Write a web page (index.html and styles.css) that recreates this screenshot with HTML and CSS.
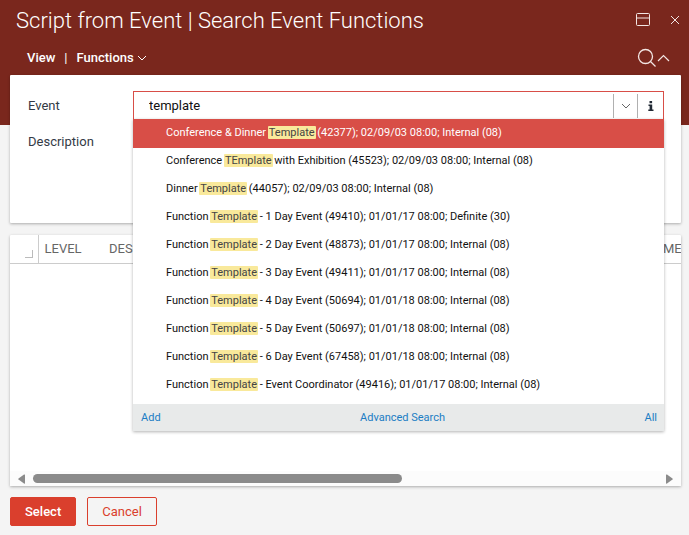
FILE: index.html
```html
<!DOCTYPE html>
<html lang="en">
<head>
<meta charset="UTF-8">
<title>Script from Event | Search Event Functions</title>
<meta name="viewport" content="width=device-width, initial-scale=1.0">
<link rel="stylesheet" href="styles.css">
</head>
<body>

<header class="header">
  <div class="title-bar">
    <h1>Script from Event | Search Event Functions</h1>
    <button type="button" class="icon-button" aria-label="Maximize">
      <svg width="16" height="14" viewBox="0 0 16 14" fill="none" stroke="currentColor">
        <rect x="1.5" y=".5" width="13" height="12" rx="1"/>
        <path d="M1.5 5h13"/>
      </svg>
    </button>
    <button type="button" class="icon-button close" aria-label="Close">
      <svg width="10" height="10" viewBox="0 0 10 10" fill="none" stroke="currentColor">
        <path d="M1 1l8 8M9 1l-8 8"/>
      </svg>
    </button>
  </div>
  <nav class="menu-bar">
    <button type="button" class="menu-item">View</button>
    <span class="divider">|</span>
    <button type="button" class="menu-item">Functions
      <svg width="10" height="6" viewBox="0 0 10 6" fill="none" stroke="currentColor">
        <path d="M1 1l4 4 4-4"/>
      </svg>
    </button>
    <button type="button" class="icon-button search" aria-label="Search">
      <svg width="20" height="20" viewBox="0 0 20 20" fill="none" stroke="currentColor" stroke-width="1.3">
        <circle cx="8.5" cy="8.5" r="7"/>
        <path d="M13.5 13.5l5 5"/>
      </svg>
    </button>
    <button type="button" class="icon-button" aria-label="Collapse">
      <svg width="13" height="8" viewBox="0 0 13 8" fill="none" stroke="currentColor" stroke-width="1.2">
        <path d="M1 7l5.500-5.500L12 7"/>
      </svg>
    </button>
  </nav>
</header>

<main>
  <section class="panel form">
    <div class="form-row">
      <label for="event">Event</label>
      <div class="lookup">
        <input type="text" id="event" value="template" autocomplete="off">
        <button type="button" class="lookup-button" aria-label="Open list">
          <svg width="10" height="6" viewBox="0 0 10 6" fill="none" stroke="currentColor">
            <path d="M1 1l4 4 4-4"/>
          </svg>
        </button>
        <button type="button" class="lookup-button info" aria-label="Information">
          <svg width="6" height="10" viewBox="0 0 6 10" fill="currentColor">
            <path d="M1.5 0h2.600v2.200H1.500zM.5 3.400h3.700v5H5.500V10H.3V8.400h1.300V5H.5z"/>
          </svg>
        </button>

        <div class="dropdown">
          <ul class="results">
            <li class="selected">Conference &amp; Dinner <mark>Template</mark> (42377); 02/09/03 08:00; Internal (08)</li>
            <li>Conference <mark>TEmplate</mark> with Exhibition (45523); 02/09/03 08:00; Internal (08)</li>
            <li>Dinner <mark>Template</mark> (44057); 02/09/03 08:00; Internal (08)</li>
            <li>Function <mark>Template</mark> - 1 Day Event (49410); 01/01/17 08:00; Definite (30)</li>
            <li>Function <mark>Template</mark> - 2 Day Event (48873); 01/01/17 08:00; Internal (08)</li>
            <li>Function <mark>Template</mark> - 3 Day Event (49411); 01/01/17 08:00; Internal (08)</li>
            <li>Function <mark>Template</mark> - 4 Day Event (50694); 01/01/18 08:00; Internal (08)</li>
            <li>Function <mark>Template</mark> - 5 Day Event (50697); 01/01/18 08:00; Internal (08)</li>
            <li>Function <mark>Template</mark> - 6 Day Event (67458); 01/01/18 08:00; Internal (08)</li>
            <li>Function <mark>Template</mark> - Event Coordinator (49416); 01/01/17 08:00; Internal (08)</li>
          </ul>
          <div class="dropdown-footer">
            <a href="#">Add</a>
            <a href="#">Advanced Search</a>
            <a href="#">All</a>
          </div>
        </div>
      </div>
    </div>
    <div class="form-row">
      <span class="label">Description</span>
    </div>
  </section>

  <section class="panel grid">
    <div class="grid-scroll">
      <table>
        <thead>
          <tr>
            <th class="corner"><span></span></th>
            <th class="level">LEVEL</th>
            <th class="description">DESC</th>
            <th>ME</th>
          </tr>
        </thead>
      </table>
    </div>
    <div class="scrollbar">
      <svg width="7" height="10" viewBox="0 0 7 10" fill="currentColor"><path d="M7 1v8Q7 10 6 9.400L.5 5.600Q0 5 .5 4.400L6 .6Q7 0 7 1z"/></svg>
      <div class="track"><div class="thumb"></div></div>
      <svg width="7" height="10" viewBox="0 0 7 10" fill="currentColor"><path d="M0 1v8Q0 10 1 9.400L6.500 5.600Q7 5 6.500 4.400L1 .6Q0 0 0 1z"/></svg>
    </div>
  </section>
</main>

<footer class="actions">
  <button type="button" class="button primary">Select</button>
  <button type="button" class="button">Cancel</button>
</footer>

</body>
</html>
```
FILE: styles.css
```css
* {
  box-sizing: border-box;
}

body {
  display: flex;
  flex-direction: column;
  min-height: 100vh;
  margin: 0;
  background: #f4f4f4;
  color: #333a45;
  font-family: Roboto, Arial, sans-serif;
  font-size: 13px;
}

button {
  font: inherit;
  cursor: pointer;
}

svg {
  display: block;
}

.header {
  padding-bottom: 50px;
  background: #7a271d;
  color: #fff;
}

.title-bar {
  display: flex;
  align-items: center;
  height: 40px;
  padding: 0 9px 0 16px;
}

.title-bar h1 {
  flex: 1;
  margin: 0;
  font-size: 22px;
  font-weight: 300;
}

.icon-button {
  padding: 0;
  border: 0;
  background: none;
  color: #f3e6e4;
}

.close {
  margin-left: 19px;
}

.menu-bar {
  display: flex;
  align-items: center;
  height: 35px;
  padding: 0 19px 0 27px;
}

.menu-item {
  display: flex;
  align-items: center;
  gap: 3px;
  padding: 0;
  border: 0;
  background: none;
  color: #fff;
  font-weight: 500;
}

.divider {
  margin: 0 9px;
}

.search {
  margin-left: auto;
}

main {
  display: flex;
  flex: 1;
  flex-direction: column;
  gap: 12px;
  margin-top: -50px;
  padding: 0 8px 0 10px;
}

.panel {
  border-radius: 1px;
  background: #fff;
  box-shadow: 0 1px 3px rgba(0, 0, 0, 0.3);
}

.form {
  min-height: 148px;
  padding: 16px 17px 16px 18px;
}

.form-row {
  display: flex;
  align-items: center;
  min-height: 28px;
  margin-bottom: 8px;
}

.form-row label,
.form-row .label {
  width: 105px;
}

.lookup {
  position: relative;
  display: flex;
  flex: 1;
  align-items: center;
  height: 28px;
  border: 1px solid #d84e47;
  border-bottom: 0;
}

.lookup input {
  flex: 1;
  min-width: 0;
  padding: 0 15px;
  border: 0;
  outline: 0;
  background: none;
  color: #111;
  font: inherit;
}

.lookup-button {
  display: flex;
  align-items: center;
  justify-content: center;
  width: 24px;
  height: 24px;
  padding: 0;
  border: 0;
  border-left: 1px solid #b0b0b0;
  background: none;
  color: #666;
}

.lookup-button.info {
  width: 26px;
  color: #222a35;
}

.dropdown {
  position: absolute;
  top: 100%;
  left: -1px;
  right: -1px;
  z-index: 1;
  background: #fff;
  box-shadow: 0 1px 3px rgba(0, 0, 0, 0.3);
}

.results {
  margin: 0;
  padding: 0 0 5px;
  list-style: none;
  color: #111;
  font-size: 11px;
  line-height: 28px;
}

.results li {
  padding-left: 33px;
}

.results .selected {
  margin-bottom: -1px;
  padding-bottom: 1px;
  background: #d84e47;
  color: #fff;
}

.results mark {
  margin: 0 -1px;
  padding: 0 1px;
  border-radius: 1px;
  background: #f9e99b;
  color: #444;
}

.dropdown-footer {
  display: flex;
  align-items: center;
  justify-content: space-between;
  height: 27px;
  padding: 0 7px 0 8px;
  background: #e8eaea;
  font-size: 11px;
}

.dropdown-footer a {
  color: #1b7dc4;
  text-decoration: none;
}

.grid {
  display: flex;
  flex: 1;
  flex-direction: column;
}

.grid-scroll {
  flex: 1;
  overflow: hidden;
}

.grid table {
  width: 900px;
  border-collapse: collapse;
  table-layout: fixed;
}

.grid th {
  height: 28px;
  padding: 0 6px;
  border-bottom: 1px solid #ccc;
  color: #666;
  font-weight: 400;
  text-align: left;
}

.grid .corner {
  width: 28px;
  padding: 0 5px 5px 0;
  border-right: 1px solid #ccc;
  vertical-align: bottom;
}

.corner span {
  display: block;
  width: 8px;
  height: 8px;
  margin-left: auto;
  border: solid #bbb;
  border-width: 0 1px 1px 0;
}

.grid .level {
  width: 65px;
}

.grid .description {
  width: 554px;
}

.scrollbar {
  display: flex;
  align-items: center;
  gap: 8px;
  height: 15px;
  padding: 0 8px;
  background: #fcfcfc;
  color: #8b8b8b;
}

.track {
  flex: 1;
}

.thumb {
  width: 59%;
  height: 9px;
  border-radius: 5px;
  background: #8b8b8b;
}

.actions {
  display: flex;
  gap: 11px;
  padding: 11px 10px 9px;
}

.button {
  height: 29px;
  padding: 0 14px;
  border: 1px solid #da3f2d;
  border-radius: 2px;
  background: none;
  color: #da3f2d;
}

.button.primary {
  background: #da3f2d;
  color: #fff;
  font-weight: 500;
}
```
